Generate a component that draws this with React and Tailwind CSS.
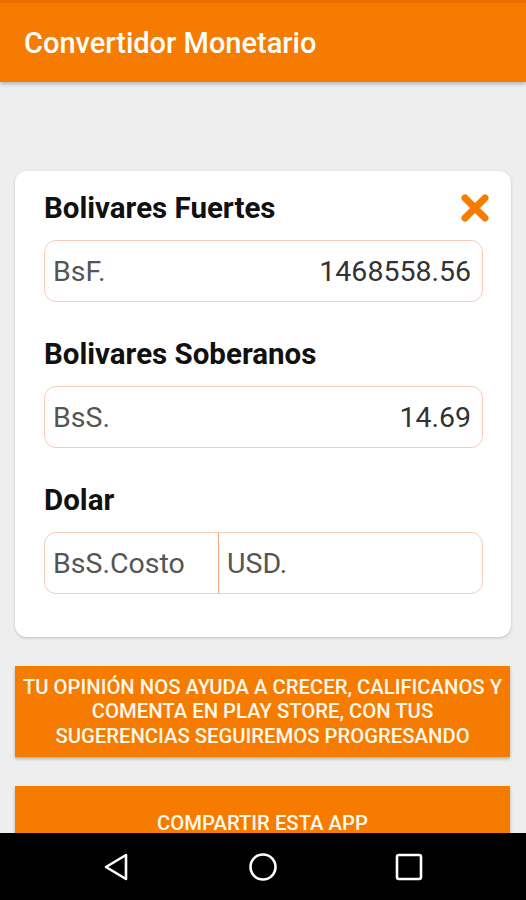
export default function App() {
  const font = { fontFamily: "Roboto, 'Noto Sans', sans-serif" };
  return (
    <div className="w-[526px] h-[900px] flex flex-col bg-[#eeeeee] overflow-hidden" style={font}>
      <div className="relative z-10 h-[82px] shrink-0 bg-[#f57c00] flex flex-col shadow-[0_2px_4px_rgba(0,0,0,0.25)]">
        <div className="h-[3px] bg-[#ee6d00]"></div>
        <div className="flex-1 flex items-center pl-[24px] pt-[3px]">
          <span className="text-white text-[29px] font-medium">Convertidor Monetario</span>
        </div>
      </div>

      <div className="flex-1 overflow-hidden flex flex-col pt-[89px] px-[15px]">
        <div className="shrink-0 bg-white rounded-[12px] shadow-[0_1px_3px_rgba(0,0,0,0.2)] pt-[17px] pb-[43px] pl-[29px] pr-[28px] w-[496px]">
          <div className="h-[40px] flex items-center justify-between">
            <span className="text-[29.5px] font-bold text-[#111]">Bolivares Fuertes</span>
            <svg width="32" height="32" viewBox="0 0 32 32" className="mr-[-8px]">
              <path d="M6 6 L26 26 M26 6 L6 26" stroke="#f57c00" strokeWidth="7" strokeLinecap="round" />
            </svg>
          </div>
          <div className="mt-[12px] h-[62px] rounded-[12px] border-[1.5px] border-[#f5cdb4] flex items-center justify-between px-[8px] pt-[3px] text-[28.5px]">
            <span className="text-[#555]">BsF.</span>
            <span className="text-[#333] pr-[3px]">1468558.56</span>
          </div>

          <div className="mt-[32px] h-[40px] flex items-center">
            <span className="text-[29.5px] font-bold text-[#111]">Bolivares Soberanos</span>
          </div>
          <div className="mt-[12px] h-[62px] rounded-[12px] border-[1.5px] border-[#f5cdb4] flex items-center justify-between px-[8px] pt-[3px] text-[28.5px]">
            <span className="text-[#555]">BsS.</span>
            <span className="text-[#333] pr-[3px]">14.69</span>
          </div>

          <div className="mt-[32px] h-[40px] flex items-center">
            <span className="text-[29.5px] font-bold text-[#111]">Dolar</span>
          </div>
          <div className="mt-[12px] h-[62px] rounded-[12px] border-[1.5px] border-[#f5cdb4] flex text-[28.5px]">
            <div className="w-[174px] flex items-center pl-[8px] pt-[3px] border-r-[1.5px] border-[#f0a878]">
              <span className="text-[#555]">BsS.Costo</span>
            </div>
            <div className="flex-1 flex items-center pl-[8px] pt-[3px]">
              <span className="text-[#555]">USD.</span>
            </div>
          </div>
        </div>

        <div className="shrink-0 mt-[29px] w-[495px] h-[91px] bg-[#f57c00] shadow-[0_2px_3px_rgba(0,0,0,0.25)] flex items-center justify-center text-center px-[2px]">
          <span className="text-[#fff8ec] text-[20.3px] font-medium leading-[24.5px] uppercase whitespace-nowrap">
            Tu opinión nos ayuda a crecer, calificanos y
            <br />
            comenta en play store, con tus
            <br />
            sugerencias seguiremos progresando
          </span>
        </div>

        <div className="shrink-0 mt-[29px] w-[495px] h-[74px] bg-[#f57c00] shadow-[0_2px_3px_rgba(0,0,0,0.25)] flex items-center justify-center">
          <span className="text-[#fff8ec] text-[20.3px] font-medium uppercase">Compartir esta app</span>
        </div>
      </div>

      <div className="h-[67px] shrink-0 bg-black flex items-center justify-center">
        <div className="w-[146px] flex justify-center">
          <svg width="30" height="30" viewBox="0 0 30 30">
            <path d="M24 3 L24 27 L4 15 Z" fill="none" stroke="white" strokeWidth="2.6" strokeLinejoin="round" />
          </svg>
        </div>
        <div className="w-[146px] flex justify-center">
          <svg width="30" height="30" viewBox="0 0 30 30">
            <circle cx="15" cy="15" r="12.5" fill="none" stroke="white" strokeWidth="2.6" />
          </svg>
        </div>
        <div className="w-[146px] flex justify-center">
          <svg width="30" height="30" viewBox="0 0 30 30">
            <rect x="3" y="3" width="24" height="24" rx="2" fill="none" stroke="white" strokeWidth="2.6" />
          </svg>
        </div>
      </div>
    </div>
  );
}
